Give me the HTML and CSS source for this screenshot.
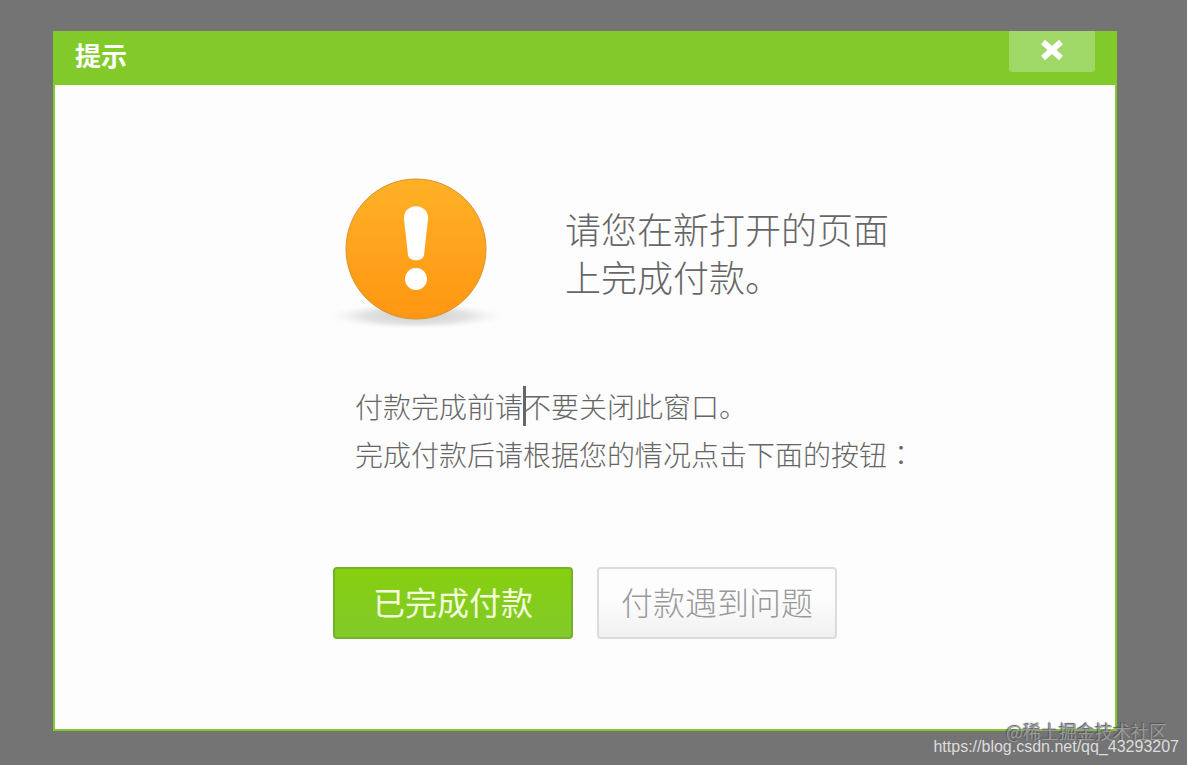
FILE: index.html
```html
<!DOCTYPE html>
<html lang="zh-CN">
<head>
    <meta charset="UTF-8">
    <meta name="viewport" content="width=device-width, initial-scale=1.0">
    <title>提示</title>
    <link rel="stylesheet" href="styles.css">
</head>
<body>
    <div class="dialog" role="dialog" aria-labelledby="dialogTitle">
        <div class="dialog-header">
            <h1 id="dialogTitle">提示</h1>
            <button type="button" class="close" aria-label="关闭">
                <svg width="24" height="24" viewBox="0 0 24 24">
                    <path d="M3 4L21 20M21 4L3 20" stroke="#fff" stroke-width="6" fill="none"/>
                </svg>
            </button>
        </div>
        <div class="dialog-body">
            <div class="notice">
                <svg class="notice-icon" width="172" height="156" viewBox="0 0 172 156">
                    <defs>
                        <linearGradient id="orange" x1="0" y1="0" x2="0" y2="1">
                            <stop offset="0" stop-color="#ffb126"/>
                            <stop offset="1" stop-color="#ff9612"/>
                        </linearGradient>
                        <radialGradient id="shadow">
                            <stop offset="0" stop-color="#aaa" stop-opacity="0.6"/>
                            <stop offset="0.6" stop-color="#bbb" stop-opacity="0.4"/>
                            <stop offset="1" stop-color="#ddd" stop-opacity="0"/>
                        </radialGradient>
                    </defs>
                    <ellipse cx="86" cy="142" rx="86" ry="13" fill="url(#shadow)"/>
                    <circle cx="86" cy="75" r="70" fill="url(#orange)" stroke="#d59430" stroke-width="1"/>
                    <path d="M74 45C73 28 99 28 98 45L94 81C93 88 79 88 78 81Z" fill="#fff"/>
                    <circle cx="86" cy="105" r="11" fill="#fff"/>
                </svg>
                <p class="notice-text">请您在新打开的页面<br>上完成付款。</p>
            </div>
            <div class="tips">
                <p>付款完成前请<span class="caret"></span>不要关闭此窗口。</p>
                <p>完成付款后请根据您的情况点击下面的按钮<span class="colon" lang="zh-TW">：</span></p>
            </div>
            <div class="actions">
                <button type="button" class="btn btn-primary">已完成付款</button>
                <button type="button" class="btn btn-default">付款遇到问题</button>
            </div>
        </div>
    </div>
    <div class="watermark">
        <span class="watermark-name">@稀土掘金技术社区</span>
        <span class="watermark-url">https://blog.csdn.net/qq_43293207</span>
    </div>
</body>
</html>
```
FILE: styles.css
```css
* {
    box-sizing: border-box;
}

body {
    margin: 0;
    min-height: 100vh;
    padding: 31px 70px 35px 53px;
    background: #747474 padding-box;
    border-right: 2px solid #fff;
    font-family: "Noto Sans CJK SC", sans-serif;
    color: #666;
    position: relative;
}

html {
    background-color: #fff;
}

h1, p {
    margin: 0;
}

button {
    font-family: inherit;
    padding: 0;
    cursor: pointer;
}

.dialog {
    background-color: #fdfdfd;
    border: 2px solid #82ca2a;
    border-top: none;
}

.dialog-header {
    display: flex;
    justify-content: space-between;
    align-items: flex-start;
    height: 54px;
    padding: 0 20px;
    background-color: #82ca2a;
}

.dialog-header h1 {
    font-size: 26px;
    line-height: 48px;
    font-weight: 700;
    color: #fff;
}

.close {
    display: flex;
    justify-content: center;
    align-items: center;
    width: 86px;
    height: 41px;
    padding-bottom: 4px;
    background-color: #9fd867;
    border: none;
    border-radius: 0 0 4px 4px;
}

.dialog-body {
    padding: 89px 32px 90px 275px;
}

.notice {
    display: flex;
    align-items: center;
    gap: 63px;
}

.notice-text {
    font-size: 36px;
    line-height: 48px;
    font-weight: 300;
    white-space: nowrap;
}

.tips {
    margin: 52px 0 89px 25px;
    font-size: 28px;
    line-height: 48px;
    font-weight: 300;
    white-space: nowrap;
}

.colon {
    font-family: "Noto Sans CJK TC", sans-serif;
}

/* text cursor between two characters */
.caret {
    position: relative;
}

.caret::before {
    content: "";
    position: absolute;
    left: 0;
    top: 0;
    width: 3px;
    height: 40px;
    background-color: #666;
}

.actions {
    display: flex;
    gap: 24px;
    padding-left: 3px;
}

.btn {
    width: 240px;
    height: 72px;
    padding-bottom: 4px;
    font-size: 32px;
    line-height: 64px;
    font-weight: 300;
    border-radius: 4px;
}

.btn-primary {
    background: linear-gradient(#86cf0f, #82ca2a);
    border: 2px solid #72b424;
    font-weight: 400;
    color: #f4ffdc;
}

.btn-default {
    background: linear-gradient(#fdfdfd 40%, #f1f1f1);
    border: 2px solid #dcdcdc;
    color: #999;
}

.watermark {
    position: absolute;
    right: 8px;
    bottom: 9px;
    display: flex;
    flex-direction: column;
    align-items: flex-end;
}

.watermark-name {
    margin-right: 12px;
    font-size: 18px;
    line-height: 12px;
    color: #999;
    text-shadow: -1px -1px 1px #555;
}

.watermark-url {
    font-family: "Liberation Sans", Arial, sans-serif;
    font-size: 16px;
    line-height: 20px;
    color: #ddd;
}
```
